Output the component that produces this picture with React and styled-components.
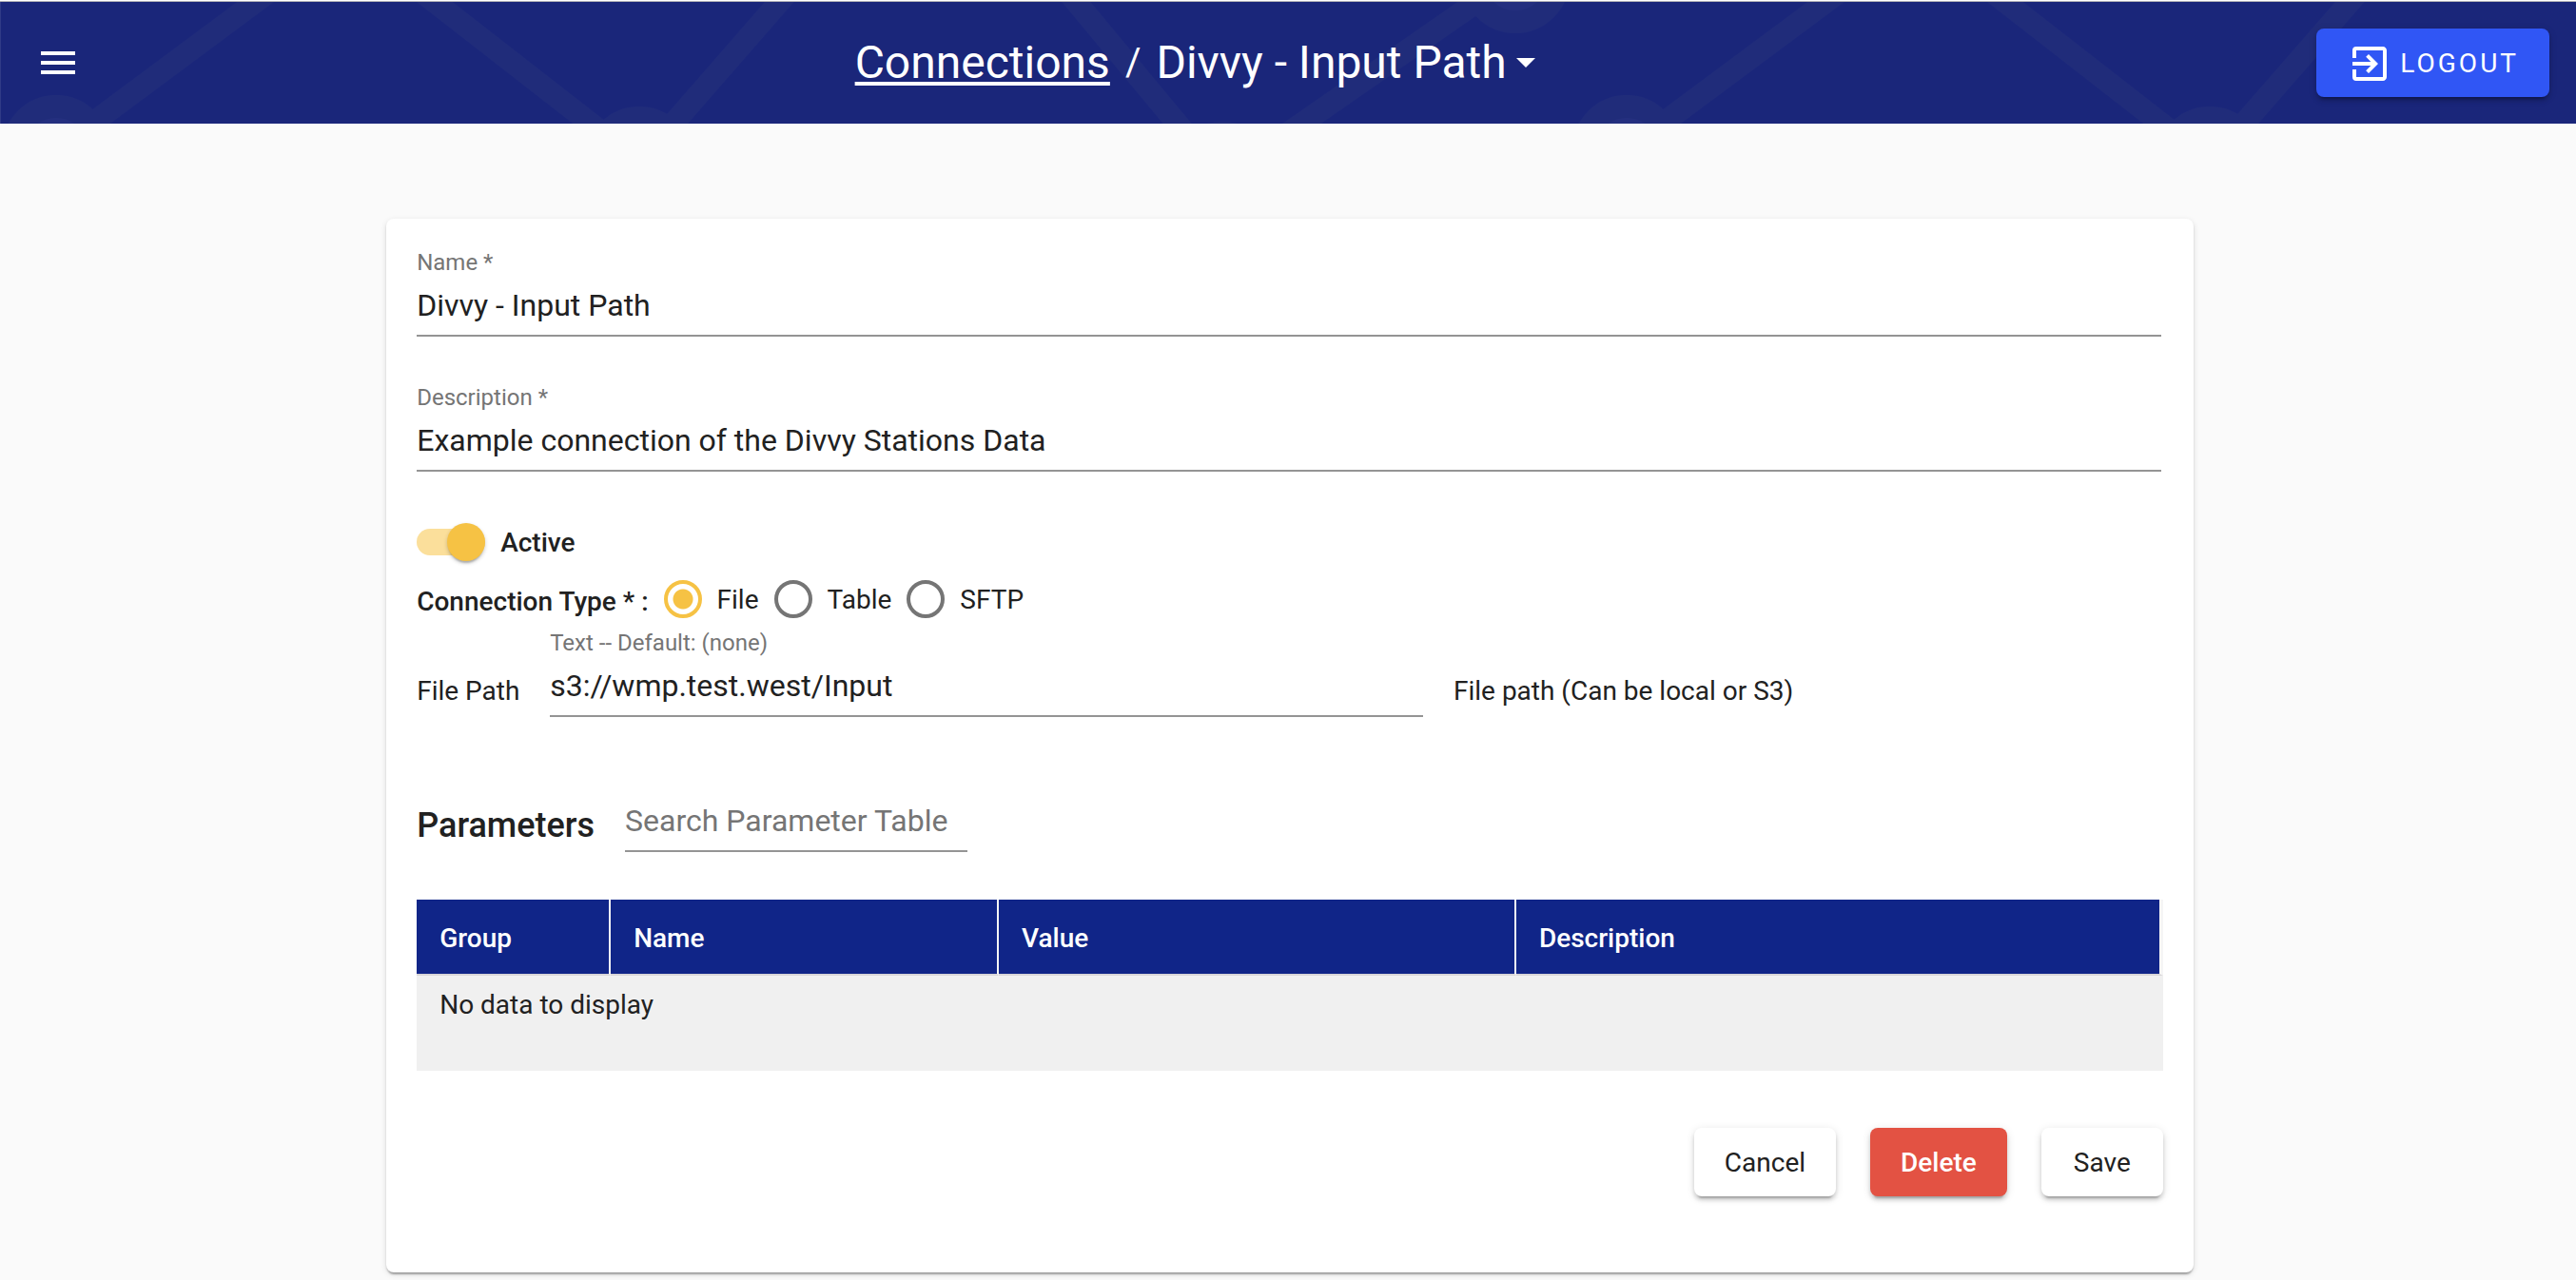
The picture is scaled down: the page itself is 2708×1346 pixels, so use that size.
import React, { useState } from "react";
import styled, { createGlobalStyle } from "styled-components";
import { MdMenu, MdExitToApp } from "react-icons/md";

const GlobalStyle = createGlobalStyle`
  *, *::before, *::after { box-sizing: border-box; }
  body {
    margin: 0;
    background: #fafafa;
    color: #212121;
    font-family: Roboto, "Liberation Sans", sans-serif;
    font-size: 28px;
    line-height: 36px;
  }
  button, input { font: inherit; color: inherit; }
`;

const Header = styled.header`
  position: relative;
  display: flex;
  justify-content: space-between;
  align-items: center;
  height: 130px;
  padding: 1px 28px 0 37px;
  border-top: 1px solid #fff;
  background: #1a267a;
  color: #fff;
  box-shadow: inset 0 1px 0 #b4b4b8, inset 1px 0 0 #303b86;
`;

const Backdrop = styled.svg`
  position: absolute;
  left: 0;
  top: 1px;
  width: 100%;
  height: 128px;
`;

const MenuButton = styled.button`
  position: relative;
  display: flex;
  padding: 0;
  border: 0;
  background: none;
  color: #fff;
`;

const Title = styled.h1`
  position: relative;
  display: flex;
  align-items: center;
  margin: 0;
  padding-right: 8px;
  font-size: 48px;
  line-height: 64px;
  font-weight: 400;
`;

const Crumb = styled.a`
  color: inherit;
  text-decoration: underline;
  text-decoration-thickness: 4px;
  text-underline-offset: 4px;
`;

const Slash = styled.span`
  padding: 0 16px;
  font-size: 40px;
`;

const PageMenu = styled.button`
  display: flex;
  align-items: center;
  gap: 10px;
  padding: 0;
  border: 0;
  background: none;
`;

const Caret = styled.span`
  border: 10px solid transparent;
  border-top-color: #fff;
  border-bottom: 0;
`;

const Button = styled.button`
  position: relative;
  min-width: 128px;
  height: 72px;
  padding: 2px 32px 0;
  border: 0;
  border-radius: 8px;
  background: ${(p) => p.$bg || "#fff"};
  color: ${(p) => (p.$bg ? "#fff" : "#212121")};
  font-weight: ${(p) => (p.$bg ? 500 : 400)};
  box-shadow: 0 6px 2px -4px rgba(0, 0, 0, 0.2), 0 4px 4px rgba(0, 0, 0, 0.14),
    0 2px 10px rgba(0, 0, 0, 0.12);
`;

const LogoutButton = styled(Button)`
  display: flex;
  align-items: center;
  gap: 8px;
  font-weight: 400;
  letter-spacing: 3px;
`;

const Card = styled.main`
  margin: 100px calc(15% - 4px) 8px 15%;
  padding: 32px 32px 80px;
  border-radius: 8px;
  background: #fff;
  box-shadow: 0 4px 2px -2px rgba(0, 0, 0, 0.2), 0 2px 2px rgba(0, 0, 0, 0.14),
    0 2px 6px rgba(0, 0, 0, 0.12);
`;

const Details = styled.section`
  padding-right: 2px;
`;

const Field = styled.div`
  display: flex;
  flex-direction: column;
  width: ${(p) => p.$width || "auto"};
  margin-bottom: ${(p) => p.$gap || "0"};
`;

const FieldLabel = styled.label`
  color: #757575;
  font-size: 24px;
  line-height: 28px;
`;

const TextInput = styled.input`
  width: 100%;
  height: 64px;
  padding: 0;
  border: 0;
  border-bottom: 2px solid #949494;
  border-radius: 0;
  background: none;
  font-size: 32px;
  outline: 0;
  &::placeholder { color: #757575; opacity: 1; }
`;

const ToggleRow = styled.label`
  display: flex;
  align-items: center;
  gap: 16px;
  height: 40px;
  font-weight: 500;
`;

const ControlText = styled.span`
  padding-top: 2px;
`;

const Toggle = styled.input`
  appearance: none;
  display: flex;
  align-items: center;
  width: 72px;
  height: 28px;
  margin: 0;
  border-radius: 14px;
  background: #fbdf9b;
  &::before {
    content: "";
    width: 40px;
    height: 40px;
    flex: none;
    margin-left: auto;
    border-radius: 50%;
    background: #f6c244;
    box-shadow: 0 4px 2px -2px rgba(0, 0, 0, 0.2), 0 2px 4px rgba(0, 0, 0, 0.2);
  }
  &:not(:checked) { background: #9e9e9e; }
  &:not(:checked)::before { margin-left: 0; background: #fafafa; }
`;

const RadioRow = styled.div`
  display: flex;
  align-items: center;
  gap: 16px;
  height: 40px;
  margin: 20px 0 12px;
`;

const RadioTitle = styled.span`
  padding-top: 6px;
  font-weight: 500;
`;

const RadioLabel = styled.label`
  display: flex;
  align-items: center;
  gap: 16px;
`;

const Radio = styled.input`
  appearance: none;
  width: 40px;
  height: 40px;
  margin: 0;
  border: 4px solid #757575;
  border-radius: 50%;
  &:checked {
    border-color: #f6c244;
    background: radial-gradient(circle, #f6c244 10px, transparent 11px);
  }
`;

const PathRow = styled.div`
  display: grid;
  grid-template-columns: 108px 50% 1fr;
  column-gap: 32px;
  align-items: end;
`;

const PathText = styled.label`
  padding-bottom: 9px;
  white-space: nowrap;
`;

const SearchRow = styled.div`
  display: flex;
  align-items: center;
  gap: 32px;
  margin-top: 78px;
`;

const SectionTitle = styled.h2`
  margin: 0;
  padding-top: 8px;
  font-size: 36px;
  line-height: 44px;
  font-weight: 500;
`;

const Table = styled.table`
  width: 100%;
  margin: 50px 0 60px;
  border-collapse: separate;
  border-spacing: 0;
  table-layout: fixed;
  background: #f0f0f0;
`;

const HeadCell = styled.th`
  width: ${(p) => p.$width};
  height: 80px;
  padding: 4px 24px 0;
  border-right: 2px solid #f5f5f5;
  border-bottom: 2px solid #d8d6d8;
  background: #102588;
  background-clip: padding-box;
  color: #fff;
  font-weight: 500;
  text-align: left;
  &:last-child { border-right-width: 4px; }
`;

const EmptyCell = styled.td`
  height: 100px;
  padding: 13px 24px;
  vertical-align: top;
`;

const Actions = styled.div`
  display: flex;
  justify-content: flex-end;
  gap: 36px;
`;

const COLUMNS = [
  { title: "Group", width: "11.11%" },
  { title: "Name", width: "22.22%" },
  { title: "Value", width: "29.63%" },
  { title: "Description" },
];

function HeaderPattern() {
  return (
    <Backdrop aria-hidden="true">
      <defs>
        <pattern id="network" width="1651" height="128" patternUnits="userSpaceOnUse">
          <g transform="translate(0 -2)" fill="none" stroke="#202c7a" strokeWidth="23">
            <path d="M83 140L282 -8M444 -8L634 140M828 -8L699 140M1123 -8L1246 140M1354 140L1567 -8" />
            <circle cx="59" cy="157" r="45" strokeWidth="24" fill="#242f7f" />
            <circle cx="672" cy="169" r="45" strokeWidth="24" />
            <circle cx="1285" cy="185" r="45" strokeWidth="24" />
            <circle cx="1593" cy="-22" r="45" strokeWidth="24" fill="#242f7f" />
          </g>
        </pattern>
      </defs>
      <rect width="100%" height="128" fill="url(#network)" />
    </Backdrop>
  );
}

export default function App() {
  const [type, setType] = useState("File");
  const [active, setActive] = useState(true);
  return (
    <>
      <GlobalStyle />
      <Header>
        <HeaderPattern />
        <MenuButton aria-label="Open menu">
          <MdMenu size={48} />
        </MenuButton>
        <Title>
          <Crumb href="#connections">Connections</Crumb>
          <Slash>/</Slash>
          <PageMenu>
            Divvy - Input Path
            <Caret />
          </PageMenu>
        </Title>
        <LogoutButton $bg="#3056f5">
          <MdExitToApp size={48} />
          LOGOUT
        </LogoutButton>
      </Header>
      <Card>
        <Details>
          <Field $gap="50px">
            <FieldLabel htmlFor="name">Name *</FieldLabel>
            <TextInput id="name" defaultValue="Divvy - Input Path" />
          </Field>
          <Field $gap="54px">
            <FieldLabel htmlFor="description">Description *</FieldLabel>
            <TextInput id="description" defaultValue="Example connection of the Divvy Stations Data" />
          </Field>
        </Details>
        <ToggleRow>
          <Toggle
            type="checkbox"
            role="switch"
            checked={active}
            onChange={(e) => setActive(e.target.checked)}
          />
          <ControlText>Active</ControlText>
        </ToggleRow>
        <RadioRow role="radiogroup" aria-labelledby="type-title">
          <RadioTitle id="type-title">Connection Type * :</RadioTitle>
          {["File", "Table", "SFTP"].map((option) => (
            <RadioLabel key={option}>
              <Radio
                type="radio"
                name="type"
                checked={type === option}
                onChange={() => setType(option)}
              />
              <ControlText>{option}</ControlText>
            </RadioLabel>
          ))}
        </RadioRow>
        <PathRow>
          <PathText htmlFor="path">File Path</PathText>
          <Field>
            <FieldLabel htmlFor="path">Text -- Default: (none)</FieldLabel>
            <TextInput id="path" defaultValue="s3://wmp.test.west/Input" />
          </Field>
          <PathText htmlFor="path">File path (Can be local or S3)</PathText>
        </PathRow>
        <SearchRow>
          <SectionTitle>Parameters</SectionTitle>
          <Field $width="360px">
            <TextInput aria-label="Search Parameter Table" placeholder="Search Parameter Table" />
          </Field>
        </SearchRow>
        <Table>
          <thead>
            <tr>
              {COLUMNS.map((c) => (
                <HeadCell key={c.title} $width={c.width}>
                  {c.title}
                </HeadCell>
              ))}
            </tr>
          </thead>
          <tbody>
            <tr>
              <EmptyCell colSpan={4}>No data to display</EmptyCell>
            </tr>
          </tbody>
        </Table>
        <Actions>
          <Button>Cancel</Button>
          <Button $bg="#e35243">Delete</Button>
          <Button>Save</Button>
        </Actions>
      </Card>
    </>
  );
}
